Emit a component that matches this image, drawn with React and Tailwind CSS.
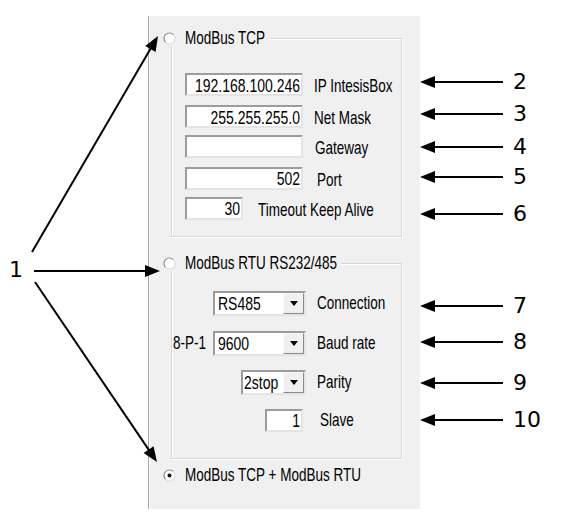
import React from 'react';

const ui = { fontFamily: '"Liberation Sans", Arial, sans-serif' };
const marker = { fontFamily: '"DejaVu Sans", Verdana, sans-serif' };

// the dialog font is tall and narrow, so stretch the glyphs vertically
function T({ children, className = '' }) {
  return <span className={`inline-block scale-y-[1.3] whitespace-nowrap ${className}`}>{children}</span>;
}

// line from (x1,y1) to the tip (x2,y2) with a filled head at the tip
function Arrow({ x1, y1, x2, y2 }) {
  const dx = x2 - x1;
  const dy = y2 - y1;
  const len = Math.hypot(dx, dy);
  const ux = dx / len;
  const uy = dy / len;
  const bx = x2 - ux * 15;
  const by = y2 - uy * 15;
  const pts = [
    [x2, y2],
    [bx - uy * 6, by + ux * 6],
    [bx + uy * 6, by - ux * 6],
  ]
    .map((p) => p.join(','))
    .join(' ');
  return (
    <g>
      <line x1={x1} y1={y1} x2={bx + ux} y2={by + uy} stroke="#000" strokeWidth="2" />
      <polygon points={pts} fill="#000" />
    </g>
  );
}

function Radio({ checked }) {
  return (
    <svg width="13" height="13" viewBox="0 0 13 13" className="shrink-0">
      <circle cx="6.5" cy="6.5" r="5.5" fill="#fff" />
      <path d="M2.6 10.4 A5.5 5.5 0 0 1 10.4 2.6" fill="none" stroke="#8c8c8c" strokeWidth="1.2" />
      <path d="M10.4 2.6 A5.5 5.5 0 0 1 2.6 10.4" fill="none" stroke="#dcdcdc" strokeWidth="1.2" />
      {checked && <circle cx="6.5" cy="6.5" r="2" fill="#000" />}
    </svg>
  );
}

function Field({ value, width }) {
  return (
    <div
      className="h-[23px] shrink-0 bg-white border-2 border-t-[#9c9c9c] border-l-[#9c9c9c] border-r-[#e4e4e4] border-b-[#e4e4e4] flex items-center justify-end pr-[1px] text-[14px] text-black leading-none"
      style={{ width }}
    >
      {value && <T>{value}</T>}
    </div>
  );
}

function Combo({ value, width, pad = 'pl-[3px]' }) {
  return (
    <div
      className="h-[25px] shrink-0 bg-white border-2 border-t-[#9c9c9c] border-l-[#9c9c9c] border-r-[#e4e4e4] border-b-[#e4e4e4] flex items-center text-[14px] text-black leading-none"
      style={{ width }}
    >
      <span className={`flex-1 ${pad}`}>
        <T>{value}</T>
      </span>
      <div className="w-[21px] h-[21px] bg-[#f0f0f0] border border-t-[#f8f8f8] border-l-[#f8f8f8] border-r-[#8a8a8a] border-b-[#8a8a8a] flex items-center justify-center">
        <svg width="8" height="5" viewBox="0 0 8 5">
          <polygon points="0,0 8,0 4,5" fill="#000" />
        </svg>
      </div>
    </div>
  );
}

function GroupBox({ label, height, children, className = '' }) {
  return (
    <div
      className={`relative w-[231px] ml-[22px] border border-[#d6d6d6] shadow-[inset_1px_1px_0_#fff,1px_1px_0_#fff] ${className}`}
      style={{ height }}
    >
      <div className="absolute -top-[8px] -left-[9px] flex items-center gap-[9px] bg-[#f0f0f0] pr-[4px] h-[15px] text-[13.5px] leading-none text-black">
        <Radio />
        <T>{label}</T>
      </div>
      {children}
    </div>
  );
}

export default function App() {
  const right = [
    { n: '2', y: 82 },
    { n: '3', y: 114 },
    { n: '4', y: 147 },
    { n: '5', y: 177 },
    { n: '6', y: 214 },
    { n: '7', y: 306 },
    { n: '8', y: 342 },
    { n: '9', y: 383 },
    { n: '10', y: 420 },
  ];

  return (
    <div className="relative w-[561px] h-[518px] bg-white flex overflow-hidden" style={ui}>
      {/* callout 1 */}
      <div className="w-[148px] shrink-0 pt-[257px] pl-[9px]">
        <div className="text-[22px] leading-[26px] text-black" style={marker}>1</div>
      </div>

      {/* settings panel */}
      <div className="w-[272px] h-[493px] mt-[16px] shrink-0 bg-[#f0f0f0] border-l border-[#a8a8a8] shadow-[inset_1px_0_0_#fff] flex flex-col">
        <GroupBox label="ModBus TCP" height={199} className="mt-[22px]">
          <div className="flex flex-col pl-[13px] pt-[34px] text-[13.5px] leading-none text-black">
            <div className="flex items-center">
              <Field value="192.168.100.246" width={118} />
              <T className="ml-[11px] mt-[4px]">IP IntesisBox</T>
            </div>
            <div className="flex items-center mt-[9px]">
              <Field value="255.255.255.0" width={118} />
              <T className="ml-[11px] mt-[4px]">Net Mask</T>
            </div>
            <div className="flex items-center mt-[7px]">
              <Field value="" width={118} />
              <T className="ml-[12px] mt-[4px]">Gateway</T>
            </div>
            <div className="flex items-center mt-[9px]">
              <Field value="502" width={118} />
              <T className="ml-[14px] mt-[4px]">Port</T>
            </div>
            <div className="flex items-center mt-[7px]">
              <Field value="30" width={58} />
              <T className="ml-[15px] mt-[4px]">Timeout Keep Alive</T>
            </div>
          </div>
        </GroupBox>

        <GroupBox label="ModBus RTU RS232/485" height={196} className="mt-[26px]">
          <div className="flex flex-col pt-[27px] text-[13.5px] leading-none text-black">
            <div className="flex items-center">
              <div className="w-[134px] flex justify-end">
                <Combo value="RS485" width={93} pad="pl-[3px]" />
              </div>
              <T className="ml-[11px]">Connection</T>
            </div>
            <div className="flex items-center mt-[15px]">
              <div className="w-[134px] flex items-center justify-end">
                <T className="mr-[7px]">8-P-1</T>
                <Combo value="9600" width={93} pad="pl-[3px]" />
              </div>
              <T className="ml-[11px]">Baud rate</T>
            </div>
            <div className="flex items-center mt-[14px]">
              <div className="w-[134px] flex justify-end">
                <Combo value="2stop" width={65} pad="pl-[1px]" />
              </div>
              <T className="ml-[11px]">Parity</T>
            </div>
            <div className="flex items-center mt-[14px]">
              <div className="w-[134px] flex justify-end pr-[3px]">
                <Field value="1" width={38} />
              </div>
              <T className="ml-[14px]">Slave</T>
            </div>
          </div>
        </GroupBox>

        <div className="flex items-center gap-[9px] ml-[14px] mt-[10px] text-[13.5px] leading-none text-black">
          <Radio checked />
          <T>ModBus TCP + ModBus RTU</T>
        </div>
      </div>

      {/* callouts 2-10 */}
      <div className="flex-1 pl-[93px] text-[22px] text-black" style={marker}>
        {right.map((r, i) => (
          <div
            key={r.n}
            className="h-[26px] leading-[26px]"
            style={{ marginTop: i === 0 ? r.y - 13 : r.y - right[i - 1].y - 26 }}
          >
            {r.n}
          </div>
        ))}
      </div>

      <svg className="absolute inset-0 pointer-events-none" width="561" height="518">
        <Arrow x1={32} y1={252} x2={158} y2={36} />
        <Arrow x1={34} y1={271} x2={160} y2={271} />
        <Arrow x1={35} y1={282} x2={157} y2={462} />
        {right.map((r) => (
          <Arrow key={r.n} x1={503} y1={r.y} x2={420} y2={r.y} />
        ))}
      </svg>
    </div>
  );
}
